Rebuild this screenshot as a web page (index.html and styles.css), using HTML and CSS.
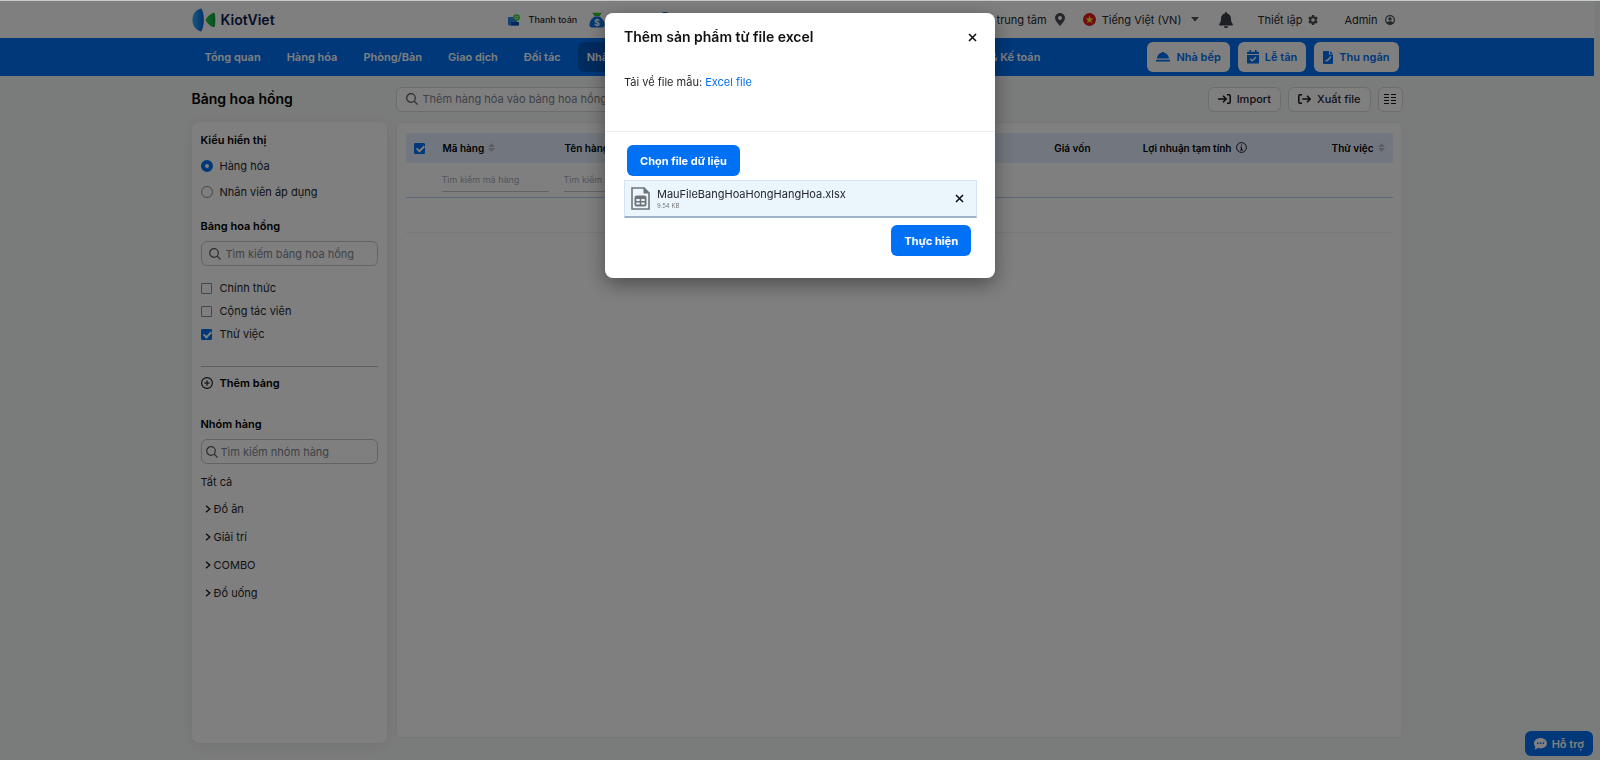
FILE: index.html
```html
<!DOCTYPE html>
<html lang="vi">
<head>
<meta charset="utf-8">
<meta name="viewport" content="width=device-width, initial-scale=1">
<title>KiotViet - Bảng hoa hồng</title>
<link rel="stylesheet" href="styles.css">
</head>
<body>
<div class="page">
  <header class="topbar">
    <div class="container topbar-inner">
      <a class="brand" href="#">
        <svg class="brand-mark" width="24" height="24" viewBox="0 0 24 24" aria-hidden="true">
          <defs><linearGradient id="brandBlue" x1="0" x2="1"><stop offset="0" stop-color="#2fb4ff"/><stop offset="1" stop-color="#0b62d8"/></linearGradient>
          <linearGradient id="brandGreen" x1="0" x2="1"><stop offset="0" stop-color="#1fc84a"/><stop offset="1" stop-color="#10a23a"/></linearGradient></defs>
          <path fill="url(#brandBlue)" d="M9.500.6C3.500 1.500.4 6.500.4 12s3.100 10.500 9.100 11.400c1.600-3.200 2.300-7.200 2.300-11.400S11.100 3.800 9.500.6z"/>
          <path fill="url(#brandGreen)" d="M13.500 12c1.700-3.200 4.300-5.800 7.300-7.100 1.300-.5 2 .2 2.200 1.500.5 3.700.5 7.500 0 11.200-.2 1.300-.9 2-2.200 1.500-3-1.300-5.600-3.900-7.300-7.100z"/>
        </svg>
        <span>KiotViet</span>
      </a>
      <div class="promos">
        <a class="promo" href="#">
          <svg width="12" height="12" viewBox="0 0 12 12" aria-hidden="true"><path fill="#2a86f0" d="M0 3h9v8.500H1.500A1.500 1.500 0 0 1 0 10z"/><path fill="#0b4fb8" d="M3 8h8v3.500H3z"/><circle cx="8.500" cy="3.500" r="3.300" fill="#35c62f"/><circle cx="8.500" cy="3.500" r="1.500" fill="none" stroke="#fff" stroke-width=".8"/></svg>
          <span>Thanh toán</span>
        </a>
        <a class="promo" href="#">
          <svg width="16" height="16" viewBox="0 0 16 16" aria-hidden="true"><path fill="#2cc52c" d="M3 .5l2.500.5 2.500-.5 2.500.5L13 .5 10.500 4h-5z"/><path fill="#0a72e6" d="M5.500 4.500h5C14 7 16 10.500 15.500 13.500c-.3 1.500-1.500 2-3 2h-9c-1.500 0-2.700-.5-3-2C0 10.500 2 7 5.500 4.500z"/><text x="8" y="13.500" text-anchor="middle" class="coin">$</text></svg>
          <span>Vay vốn</span>
        </a>
        <a class="promo" href="#">
          <svg width="10" height="16" viewBox="0 0 10 16" aria-hidden="true"><path fill="#0a72e6" d="M3 0h4l3 4v10c0 1-1 2-2 2H2c-1 0-2-1-2-2V4z"/></svg>
          <span>Bảo hiểm</span>
        </a>
      </div>
      <div class="tools">
        <span class="tool">Chi nhánh trung tâm
          <svg class="pin" width="10" height="13" viewBox="0 0 10 13" aria-hidden="true"><path fill="#4b4f54" fill-rule="evenodd" d="M5 0a5 5 0 0 1 5 5c0 2.500-2.700 5.500-5 8C2.700 10.500 0 7.500 0 5a5 5 0 0 1 5-5zm0 3a2 2 0 1 0 0 4 2 2 0 0 0 0-4z"/></svg>
        </span>
        <button class="tool lang" type="button">
          <svg width="13" height="13" viewBox="0 0 13 13" aria-hidden="true"><circle cx="6.500" cy="6.500" r="6.500" fill="#e01d1d"/><path fill="#ffe03a" d="M6.500 2.500l1 2.900h3.100L8.100 7.200l.9 3-2.500-1.800L4 10.200l.9-3-2.500-1.800h3.100z"/></svg>
          <span>Tiếng Việt (VN)</span>
          <svg class="caret" width="8" height="5" viewBox="0 0 8 5" aria-hidden="true"><path fill="#4b4f54" d="M0 0h8L4 4.500z"/></svg>
        </button>
        <button class="tool bell" type="button" aria-label="Thông báo">
          <svg width="14" height="16" viewBox="0 0 14 16" aria-hidden="true"><path fill="#3a3f4a" d="M7 0c.6 0 1 .4 1 1v.6c2.300.4 4 2.400 4 4.900 0 3 .7 4.200 1.600 5.200.6.7.2 1.800-.8 1.800H1.200c-1 0-1.400-1.100-.8-1.800C1.300 10.700 2 9.500 2 6.500 2 4 3.700 2 6 1.600V1c0-.6.400-1 1-1zM5 14.300h4a2 2 0 0 1-4 0z"/></svg>
        </button>
        <button class="tool settings" type="button">Thiết lập
          <svg width="10" height="10" viewBox="0 0 16 16" aria-hidden="true"><path fill="#4b4f54" fill-rule="evenodd" d="M6.300 0h3.400l.5 2.200 1.400.8L13.800 2.300l1.700 3L13.900 7v2l1.600 1.600-1.700 3-2.200-.6-1.400.8L9.700 16H6.300l-.5-2.200-1.400-.8-2.200.6-1.700-3L2.100 9V7L.5 5.300l1.700-3L4.400 3l1.400-.8zM8 5.200a2.800 2.800 0 1 0 0 5.600 2.800 2.800 0 0 0 0-5.600z"/></svg>
        </button>
        <button class="tool account" type="button">Admin
          <svg width="10" height="10" viewBox="0 0 16 16" aria-hidden="true"><circle cx="8" cy="8" r="7" fill="none" stroke="#4b4f54" stroke-width="2"/><circle cx="8" cy="6.200" r="2.700" fill="#4b4f54"/><path fill="#4b4f54" d="M2.500 13c.8-2 2.500-3 5.500-3s4.700 1 5.500 3c-1.400 1.300-3.300 2-5.500 2s-4.100-.7-5.500-2z"/></svg>
        </button>
      </div>
    </div>
  </header>

  <nav class="mainnav" aria-label="Chính">
    <div class="container mainnav-inner">
      <ul class="menu">
        <li><a href="#">Tổng quan</a></li>
        <li><a href="#">Hàng hóa</a></li>
        <li><a href="#">Phòng/Bàn</a></li>
        <li><a href="#">Giao dịch</a></li>
        <li><a href="#">Đối tác</a></li>
        <li><a class="active" href="#">Nhân viên</a></li>
        <li><a href="#">Sổ quỹ</a></li>
        <li><a href="#">Báo cáo</a></li>
        <li><a href="#">Thuế &amp; Kế toán</a></li>
      </ul>
      <div class="shortcuts">
        <a class="shortcut" href="#"><svg width="14" height="12" viewBox="0 0 14 12" aria-hidden="true"><path fill="#0070f4" d="M6 1.500V1h2v.7c2.800.4 4.800 2.700 5 5.800H1c.2-3.100 2.200-5.500 5-6zM0 8.800h14v1.700H0z"/></svg>Nhà bếp</a>
        <a class="shortcut" href="#"><svg width="12" height="14" viewBox="0 0 12 14" aria-hidden="true"><path fill="#0070f4" fill-rule="evenodd" d="M2.500 0h1.500v1.700h4V0h1.500v1.700H11c.6 0 1 .4 1 1V4H0V2.700c0-.6.4-1 1-1h1.500zM0 5h12v7.500c0 .6-.4 1-1 1H1c-.6 0-1-.4-1-1zm8.500 1.600L5.300 9.800 3.700 8.200l-1 1 2.600 2.600 4.200-4.200z"/></svg>Lễ tân</a>
        <a class="shortcut" href="#"><svg width="10" height="13" viewBox="0 0 10 13" aria-hidden="true"><path fill="#0070f4" fill-rule="evenodd" d="M1 0h5v3.500h4V12c0 .6-.4 1-1 1H1c-.6 0-1-.4-1-1V1c0-.6.4-1 1-1zm6 0l3 2.800H7zM7.500 5L4 8.800l-1.800.4.600 1.200L5 10l3.500-4z"/></svg>Thu ngân</a>
      </div>
    </div>
  </nav>

  <main class="container content">
    <aside class="side">
      <h1 class="page-title">Bảng hoa hồng</h1>
      <form class="filters">
        <fieldset class="group view-group">
          <legend>Kiểu hiển thị</legend>
          <label class="option"><input type="radio" name="view" checked>Hàng hóa</label>
          <label class="option"><input type="radio" name="view">Nhân viên áp dụng</label>
        </fieldset>
        <fieldset class="group table-group">
          <legend>Bảng hoa hồng</legend>
          <div class="search">
            <svg width="12" height="12" viewBox="0 0 12 12" aria-hidden="true"><circle cx="5" cy="5" r="4.300"/><path d="M8.200 8.200l3.300 3.300"/></svg>
            <input type="text" aria-label="Tìm kiếm bảng hoa hồng" placeholder="Tìm kiếm bảng hoa hồng">
          </div>
          <div class="checks">
            <label class="option"><input type="checkbox">Chính thức</label>
            <label class="option"><input type="checkbox">Cộng tác viên</label>
            <label class="option"><input type="checkbox" checked>Thử việc</label>
          </div>
        </fieldset>
        <button class="add" type="button">
          <svg width="12" height="12" viewBox="0 0 12 12" aria-hidden="true"><circle cx="6" cy="6" r="5.400"/><path d="M6 3.200v5.600M3.200 6h5.600"/></svg>Thêm bảng
        </button>
        <fieldset class="group">
          <legend>Nhóm hàng</legend>
          <div class="search tight">
            <svg width="12" height="12" viewBox="0 0 12 12" aria-hidden="true"><circle cx="5" cy="5" r="4.300"/><path d="M8.200 8.200l3.300 3.300"/></svg>
            <input type="text" aria-label="Tìm kiếm nhóm hàng" placeholder="Tìm kiếm nhóm hàng">
          </div>
          <a class="all" href="#">Tất cả</a>
          <ul class="tree">
            <li><a href="#"><svg width="6" height="8" viewBox="0 0 6 8" aria-hidden="true"><path d="M1 .8L4.800 4 1 7.200"/></svg>Đồ ăn</a></li>
            <li><a href="#"><svg width="6" height="8" viewBox="0 0 6 8" aria-hidden="true"><path d="M1 .8L4.800 4 1 7.200"/></svg>Giải trí</a></li>
            <li><a href="#"><svg width="6" height="8" viewBox="0 0 6 8" aria-hidden="true"><path d="M1 .8L4.800 4 1 7.200"/></svg>COMBO</a></li>
            <li><a href="#"><svg width="6" height="8" viewBox="0 0 6 8" aria-hidden="true"><path d="M1 .8L4.800 4 1 7.200"/></svg>Đồ uống</a></li>
          </ul>
        </fieldset>
      </form>
    </aside>

    <section class="main">
      <div class="toolbar">
        <div class="search wide">
          <svg width="12" height="12" viewBox="0 0 12 12" aria-hidden="true"><circle cx="5" cy="5" r="4.300"/><path d="M8.200 8.200l3.300 3.300"/></svg>
          <input type="text" aria-label="Thêm hàng hóa vào bảng hoa hồng" placeholder="Thêm hàng hóa vào bảng hoa hồng">
        </div>
        <div class="actions">
          <button class="action" type="button"><svg width="13" height="10" viewBox="0 0 13 10" aria-hidden="true"><path d="M0 5h8M5 1.800L8.200 5 5 8.200M9 .8h2c.7 0 1.200.5 1.200 1.200v6c0 .7-.5 1.200-1.200 1.200H9"/></svg>Import</button>
          <button class="action" type="button"><svg width="13" height="10" viewBox="0 0 13 10" aria-hidden="true"><path d="M4 .8H2C1.300.8.8 1.300.8 2v6c0 .7.500 1.200 1.200 1.200h2M4.300 5H12M9 1.800L12.200 5 9 8.200"/></svg>Xuất file</button>
          <button class="action columns" type="button" aria-label="Tùy chọn cột"><svg width="12" height="10" viewBox="0 0 12 10" aria-hidden="true"><path d="M0 .5h5M7 .5h5M0 3.500h5M7 3.500h5M0 6.500h5M7 6.500h5M0 9.500h5M7 9.500h5"/></svg></button>
        </div>
      </div>
      <div class="panel">
        <table class="grid">
          <colgroup><col class="c-check"><col class="c-code"><col class="c-name"><col class="c-cost"><col class="c-profit"><col class="c-trial"></colgroup>
          <thead>
            <tr>
              <th><input type="checkbox" checked aria-label="Chọn tất cả"></th>
              <th>Mã hàng<svg class="sort" width="7" height="9" viewBox="0 0 7 9" aria-hidden="true"><path d="M0 4l3.500-4L7 4zM0 5h7L3.500 9z"/></svg></th>
              <th>Tên hàng</th>
              <th class="num">Giá vốn</th>
              <th class="num">Lợi nhuận tạm tính<svg class="info" width="11" height="11" viewBox="0 0 11 11" aria-hidden="true"><circle cx="5.500" cy="5.500" r="4.900"/><path d="M5.500 2.500v1.200M4.300 5h1.200v3M4 8h3"/></svg></th>
              <th class="num">Thử việc<svg class="sort" width="7" height="9" viewBox="0 0 7 9" aria-hidden="true"><path d="M0 4l3.500-4L7 4zM0 5h7L3.500 9z"/></svg></th>
            </tr>
          </thead>
          <tbody>
            <tr class="filter-row">
              <td></td>
              <td><input type="text" aria-label="Tìm kiếm mã hàng" placeholder="Tìm kiếm mã hàng"></td>
              <td><input type="text" aria-label="Tìm kiếm tên hàng" placeholder="Tìm kiếm tên hàng"></td>
              <td></td><td></td><td></td>
            </tr>
            <tr class="empty-row"><td colspan="6"></td></tr>
          </tbody>
        </table>
      </div>
    </section>
  </main>
</div>

<button class="support" type="button"><svg width="13" height="12" viewBox="0 0 13 12" aria-hidden="true"><path fill="#fff" d="M6.500 0C10.100 0 13 2.300 13 5.200s-2.900 5.200-6.500 5.200c-.9 0-1.700-.1-2.500-.4-1 .8-2.400 1.400-3.800 1.400.6-.8 1.100-1.700 1.200-2.600C.5 7.900 0 6.600 0 5.200 0 2.300 2.900 0 6.500 0z"/><path fill="#0070f4" d="M3 4.500h1.500V6H3zM5.800 4.500h1.500V6H5.800zM8.600 4.500h1.500V6H8.600z"/></svg>Hỗ trợ</button>

<div class="backdrop">
  <div class="modal" role="dialog" aria-modal="true" aria-labelledby="modal-title">
    <div class="modal-head">
      <div class="modal-bar">
        <h2 id="modal-title">Thêm sản phẩm từ file excel</h2>
        <button class="close" type="button" aria-label="Đóng"><svg width="9" height="9" viewBox="0 0 9 9" aria-hidden="true"><path d="M1 1l7 7M8 1L1 8"/></svg></button>
      </div>
      <p class="template">Tải về file mẫu: <a href="#">Excel file</a></p>
    </div>
    <div class="modal-body">
      <button class="primary" type="button">Chọn file dữ liệu</button>
      <div class="file">
        <svg width="19" height="23" viewBox="0 0 19 23" aria-hidden="true"><path fill="none" stroke="#6f7577" stroke-width="1.600" d="M1 1h12l5 5v16H1z"/><path fill="#6f7577" d="M12.500 0L19 6.500h-6.500z"/><path fill="#6f7577" fill-rule="evenodd" d="M5.500 8.500h8c1 0 2 1 2 2v7c0 1-1 2-2 2h-8c-1 0-2-1-2-2v-7c0-1 1-2 2-2zM5.300 12v2h3.400v-2zm5 0v2h3.400v-2zm-5 3.500v2h3.400v-2zm5 0v2h3.400v-2z"/></svg>
        <div class="file-text">
          <span class="file-name">MauFileBangHoaHongHangHoa.xlsx</span>
          <span class="file-size">9.54 KB</span>
        </div>
        <button class="close" type="button" aria-label="Xóa file"><svg width="9" height="9" viewBox="0 0 9 9" aria-hidden="true"><path d="M1 1l7 7M8 1L1 8"/></svg></button>
      </div>
      <button class="primary submit" type="button">Thực hiện</button>
    </div>
  </div>
</div>
</body>
</html>
```

FILE: styles.css
```css
* { box-sizing: border-box; }

body {
  margin: 0;
  min-height: 100vh;
  background: #f5f8f6;
  border-top: 1px solid #c6cac8;
  font: 11px/16px Inter, "Noto Sans", sans-serif;
  color: #24272c;
}

a { color: inherit; text-decoration: none; }
ul { margin: 0; padding: 0; list-style: none; }
button, input { font: inherit; color: inherit; }
button { border: 0; padding: 0; background: none; cursor: pointer; }
svg { flex: none; }

.page { padding-right: 6px; display: flex; flex-direction: column; min-height: calc(100vh - 1px); }
.container { width: 100%; max-width: 1211px; margin: 0 auto; }

/* Top bar */
.topbar { background: #fff; }
.topbar-inner { display: flex; align-items: center; height: 37px; }
.brand { display: flex; align-items: center; gap: 5px; font-size: 14px; font-weight: 600; color: #0b1d51; width: 316px; }
.promos { display: flex; align-items: center; gap: 12px; font-size: 9px; font-weight: 500; }
.promo { display: flex; align-items: center; gap: 9px; }
.coin { font: 700 9px Inter, sans-serif; fill: #fff; }
.tools { display: flex; align-items: center; margin-left: auto; padding-right: 8px; }
.tool { display: flex; align-items: center; gap: 6px; }
.pin { margin-left: 2px; }
.lang { margin-left: 18px; }
.caret { margin-left: 4px; }
.bell { margin-left: 20px; }
.settings { margin-left: 24px; }
.account { margin-left: 26px; gap: 7px; }

/* Blue navigation */
.mainnav { background: #0070f4; }
.mainnav-inner { display: flex; align-items: center; gap: 98px; height: 38px; padding: 0 4px; }
.menu { display: flex; flex: 1; gap: 8px; color: #fff; font-weight: 600; white-space: nowrap; }
.menu li:last-child { margin-left: auto; }
.menu a { display: block; padding: 7px 9px; border-radius: 6px; }
.menu .active { background: #0058c0; }
.shortcuts { display: flex; gap: 8px; }
.shortcut { display: flex; align-items: center; gap: 6px; height: 30px; padding: 0 9px; border-radius: 6px; background: #fff; color: #0070f4; font-weight: 600; }

/* Content */
.content { display: flex; flex: 1; gap: 9px; }
.side { width: 195px; display: flex; flex-direction: column; padding-bottom: 17px; }
.page-title { margin: 0; height: 46px; line-height: 46px; font-size: 14px; font-weight: 600; color: #000; }
.filters { flex: 1; padding: 10px 9px; border-radius: 8px; background: #fff; box-shadow: 0 2px 16px rgba(0, 0, 0, .08); }
.group { margin: 0; padding: 0; border: 0; min-width: 0; }
legend { padding: 0; font-weight: 600; color: #000; }
.option { display: flex; align-items: center; gap: 7px; height: 16px; }

input[type="radio"], input[type="checkbox"] {
  appearance: none;
  flex: none;
  margin: 0;
  border: 1px solid #8a9096;
  background: #fff;
}
input[type="radio"] { width: 12px; height: 12px; border-radius: 50%; }
input[type="radio"]:checked { border: 4px solid #0070f4; }
input[type="checkbox"] { width: 11px; height: 11px; margin-right: 1px; border-radius: 1px; }
input[type="checkbox"]:checked { position: relative; border-color: #0070f4; background: #0070f4; }
input[type="checkbox"]:checked::after {
  content: "";
  position: absolute;
  left: 3px;
  top: 0;
  width: 3px;
  height: 6px;
  border: solid #fff;
  border-width: 0 2px 2px 0;
  transform: rotate(45deg);
}

.view-group .option { margin-top: 10px; }
.table-group { margin-top: 18px; }
.search { display: flex; align-items: center; gap: 5px; height: 25px; margin-top: 7px; padding: 0 7px; border: 1px solid #c3c7cc; border-radius: 6px; background: #fff; }
.search svg { fill: none; stroke: #555b63; stroke-width: 1.2; }
.search input { flex: 1; min-width: 0; padding: 0; border: 0; outline: 0; background: none; }
.search input::placeholder { color: #7d8490; opacity: 1; }
.search.tight { gap: 3px; padding: 0 4px; }
.checks { display: grid; gap: 7px; margin-top: 14px; padding-bottom: 24px; border-bottom: 1px solid #b9bcc0; }
.add { display: flex; align-items: center; gap: 7px; margin: 8px 0 25px; font-weight: 600; color: #000; }
.add svg { fill: none; stroke: #15171a; stroke-width: 1.1; }
.all { display: block; margin-top: 10px; }
.tree { display: grid; gap: 12px; margin: 11px 0 0 4px; }
.tree a { display: flex; align-items: center; gap: 3px; }
.tree svg { fill: none; stroke: #15171a; stroke-width: 1.3; }

.main { flex: 1; min-width: 0; display: flex; flex-direction: column; padding-bottom: 22px; }
.toolbar { display: flex; align-items: center; justify-content: space-between; height: 46px; }
.wide { width: 340px; margin: 0; padding: 0 9px; border-color: #d5d8dc; }
.actions { display: flex; gap: 7px; }
.action { display: flex; align-items: center; justify-content: center; gap: 6px; height: 25px; padding: 0 9px; border: 1px solid #d5d8dc; border-radius: 6px; background: #fff; font-weight: 500; }
.action svg { fill: none; stroke: #15171a; stroke-width: 1.5; }
.columns { width: 25px; padding: 0; }
.columns svg { stroke-width: 1; }

.panel { flex: 1; padding: 10px 9px; border: 1px solid #eceff0; border-radius: 6px; background: #fff; }
.grid { width: 100%; border-collapse: collapse; table-layout: fixed; }
.c-check { width: 27px; }
.c-code { width: 122px; }
.c-cost { width: 120px; }
.c-profit { width: 156px; }
.c-trial { width: 138px; }
.grid th { height: 30px; padding: 0 8px; background: #e5efff; color: #000; font-size: 10px; font-weight: 600; text-align: left; vertical-align: middle; white-space: nowrap; }
.grid th input { display: block; }
.grid th:nth-child(2), .grid th:nth-child(3) { padding-left: 10px; }
.grid .num { text-align: right; }
.sort { margin-left: 4px; fill: #b9bdc4; }
.info { margin-left: 4px; vertical-align: -1px; fill: none; stroke: #15171a; stroke-width: 1; }
.grid td { padding: 0 6px 0 9px; }
.filter-row td { height: 34px; border-bottom: 1px solid #b7d0f5; }
.filter-row input { display: block; width: 100%; height: 24px; padding: 0; border: 0; border-bottom: 1px solid #c3c7cc; outline: 0; background: none; font-size: 9px; }
.filter-row input::placeholder { color: #a8acb2; opacity: 1; }
.empty-row td { height: 35px; border-bottom: 1px solid #eff0f1; }

.support { position: fixed; right: 7px; bottom: 4px; display: flex; align-items: center; gap: 5px; height: 25px; padding: 0 9px; border-radius: 6px; background: #0070f4; color: #fff; font-weight: 600; }

/* Import dialog */
.backdrop { position: fixed; inset: 1px 0 0; display: flex; justify-content: center; align-items: flex-start; padding: 12px; background: rgba(0, 0, 0, .5); }
.modal { width: 390px; max-width: 100%; border-radius: 8px; background: #fff; box-shadow: 0 6px 20px rgba(0, 0, 0, .4); }
.modal-head { padding: 14px 18px 41px 19px; border-bottom: 1px solid #e9ebed; }
.modal-bar { display: flex; align-items: center; justify-content: space-between; }
.modal h2 { margin: 0; font-size: 14px; line-height: 20px; font-weight: 600; color: #111; }
.close { display: flex; }
.close svg { fill: none; stroke: #111; stroke-width: 1.6; }
.template { margin: 27px 0 0; }
.template a { color: #0070f4; }
.modal-body { display: flex; flex-direction: column; padding: 13px 18px 22px 19px; }
.primary { align-self: flex-start; height: 31px; margin-left: 3px; padding: 0 13px; border-radius: 6px; background: #0070f4; color: #fff; font-weight: 700; }
.file { display: flex; align-items: center; gap: 7px; height: 38px; margin: 4px 0 7px; padding: 0 12px 0 6px; border: 1px solid #d3e5f5; border-bottom: 2px solid #9fb3c8; background: #eaf6fc; }
.file-text { flex: 1; display: flex; flex-direction: column; }
.file-name { font-size: 11px; line-height: 14px; }
.file-size { font-size: 6px; line-height: 9px; color: #777; }
.submit { align-self: flex-end; margin-right: 6px; }
```
